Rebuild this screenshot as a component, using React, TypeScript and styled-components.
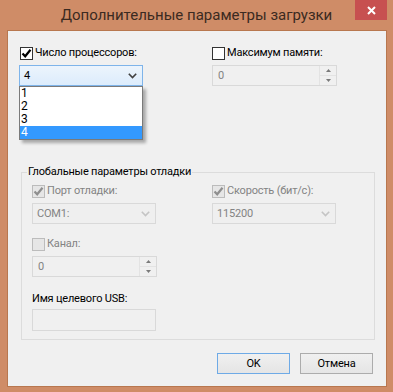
import styled, { createGlobalStyle } from 'styled-components';

const GlobalStyle = createGlobalStyle`
  html, body {
    margin: 0;
    padding: 0;
    background: #ffffff;
  }
  body {
    font-family: Roboto, "Noto Sans", "Liberation Sans", sans-serif;
  }
`;

const Window = styled.div`
  width: 393px;
  height: 392px;
  box-sizing: border-box;
  background: #cf8c67;
  display: flex;
  flex-direction: column;
`;

const TitleBar = styled.div`
  height: 30px;
  display: grid;
  grid-template-columns: 1fr auto 1fr;
  align-items: start;
`;

const Title = styled.div`
  grid-column: 2;
  font-size: 15px;
  line-height: 30px;
  color: #3b2a21;
  white-space: nowrap;
`;

const CloseButton = styled.div`
  grid-column: 3;
  justify-self: end;
  margin-right: 6px;
  width: 32px;
  height: 20px;
  background: #c75050;
  display: flex;
  align-items: center;
  justify-content: center;
`;

const Frame = styled.div`
  flex: 1;
  padding: 0 6px 6px 7px;
  display: flex;
`;

const Client = styled.div`
  flex: 1;
  background: #f0f0f0;
  border: 1px solid #b8774f;
  padding: 15px 11px 12px 11px;
  display: flex;
  flex-direction: column;
  font-size: 11px;
  letter-spacing: -0.2px;
  color: #000;
`;

const TopGrid = styled.div`
  display: grid;
  grid-template-columns: 193px 125px;
`;

const Field = styled.div`
  position: relative;
  display: flex;
  flex-direction: column;
  gap: 5px;
`;

const CheckRow = styled.div<{ $disabled?: boolean; $indent?: number }>`
  display: flex;
  align-items: center;
  height: 14px;
  gap: 2px;
  padding-left: ${({ $indent }) => $indent ?? 0}px;
  color: ${({ $disabled }) => ($disabled ? '#838383' : '#000')};
  line-height: 14px;
  white-space: nowrap;
`;

const Box = styled.span<{ $disabled?: boolean }>`
  width: 13px;
  height: 13px;
  box-sizing: border-box;
  border: 1px solid ${({ $disabled }) => ($disabled ? '#bcbcbc' : '#333333')};
  background: ${({ $disabled }) => ($disabled ? '#e6e6e6' : '#ffffff')};
  display: flex;
  align-items: center;
  justify-content: center;
  flex-shrink: 0;
`;

const ComboAnchor = styled.div`
  position: relative;
`;

const Combo = styled.div<{ $open?: boolean; $disabled?: boolean }>`
  width: 124px;
  height: 21px;
  box-sizing: border-box;
  display: flex;
  align-items: center;
  justify-content: space-between;
  padding: 0 5px 0 4px;
  border: 1px solid ${({ $open, $disabled }) => ($open ? '#7eb4ea' : $disabled ? '#d9d9d9' : '#acacac')};
  background: ${({ $open }) => ($open ? 'linear-gradient(#ecf4fc, #dcecfc)' : '#efefef')};
  color: ${({ $disabled }) => ($disabled ? '#838383' : '#000')};
`;

const DropList = styled.div`
  position: absolute;
  top: 100%;
  left: 0;
  width: 124px;
  box-sizing: border-box;
  border: 1px solid #7a7a7a;
  background: #ffffff;
  box-shadow: 3px 3px 3px rgba(0, 0, 0, 0.3);
  z-index: 2;
  font-size: 12px;
`;

const DropItem = styled.div<{ $selected?: boolean }>`
  height: 13px;
  line-height: 13px;
  padding-left: 1px;
  background: ${({ $selected }) => ($selected ? '#3399ff' : 'transparent')};
  color: ${({ $selected }) => ($selected ? '#ffffff' : '#000')};
`;

const NumberBox = styled.div`
  width: 125px;
  height: 21px;
  box-sizing: border-box;
  border: 1px solid #d9d9d9;
  display: flex;
`;

const NumberValue = styled.div`
  flex: 1;
  padding-left: 5px;
  line-height: 19px;
  color: #838383;
`;

const Spin = styled.div`
  width: 16px;
  display: flex;
  flex-direction: column;
  border-left: 1px solid #e3e3e3;
`;

const SpinHalf = styled.div`
  flex: 1;
  display: flex;
  align-items: center;
  justify-content: center;
  & + & {
    border-top: 1px solid #e3e3e3;
  }
`;

const Group = styled.fieldset`
  margin: 79px 0 0 2px;
  padding: 0 10px 8px 10px;
  border: 1px solid #dcdcdc;
  min-width: 0;
`;

const Legend = styled.legend`
  font-size: 11px;
  line-height: 14px;
  padding: 0 1px;
  margin-left: -5px;
  color: #000;
`;

const DebugGrid = styled.div`
  margin-top: 5px;
  display: grid;
  grid-template-columns: 180px 125px;
`;

const Stack = styled.div<{ $top: number }>`
  margin-top: ${({ $top }) => $top}px;
  display: flex;
  flex-direction: column;
  gap: 5px;
`;

const Label = styled.div`
  height: 14px;
  line-height: 14px;
  color: #000;
`;

const TextBox = styled.div`
  margin-top: -2px;
  width: 124px;
  height: 22px;
  box-sizing: border-box;
  border: 1px solid #d9d9d9;
`;

const ButtonRow = styled.div`
  margin-top: 13px;
  padding-right: 2px;
  display: flex;
  justify-content: flex-end;
  gap: 10px;
`;

const Button = styled.div<{ $primary?: boolean }>`
  width: 73px;
  height: 21px;
  box-sizing: border-box;
  border: 1px solid ${({ $primary }) => ($primary ? '#6eaae6' : '#acacac')};
  background: linear-gradient(#f0f0f0, #e5e5e5);
  display: flex;
  align-items: center;
  justify-content: center;
  color: #000;
`;

const CheckMark = ({ color }: { color: string }) => (
  <svg width="11" height="11" viewBox="0 0 11 11">
    <path d="M1.5 5.5 L4.2 8.3 L9.5 1.8" fill="none" stroke={color} strokeWidth="2.2" />
  </svg>
);

const Chevron = ({ color }: { color: string }) => (
  <svg width="9" height="6" viewBox="0 0 9 6">
    <path d="M0.8 0.8 L4.5 4.5 L8.2 0.8" fill="none" stroke={color} strokeWidth="1.6" />
  </svg>
);

const Arrow = ({ up }: { up?: boolean }) => (
  <svg width="5" height="3" viewBox="0 0 5 3">
    <path d={up ? 'M0 3 L2.5 0 L5 3 Z' : 'M0 0 L2.5 3 L5 0 Z'} fill="#7a7a7a" />
  </svg>
);

const Check = ({ checked, disabled }: { checked?: boolean; disabled?: boolean }) => (
  <Box $disabled={disabled}>{checked && <CheckMark color={disabled ? '#8f8f8f' : '#000'} />}</Box>
);

const Spinner = ({ value }: { value: string }) => (
  <NumberBox>
    <NumberValue>{value}</NumberValue>
    <Spin>
      <SpinHalf>
        <Arrow up />
      </SpinHalf>
      <SpinHalf>
        <Arrow />
      </SpinHalf>
    </Spin>
  </NumberBox>
);

export default function App() {
  return (
    <>
      <GlobalStyle />
      <Window>
        <TitleBar>
          <Title>Дополнительные параметры загрузки</Title>
          <CloseButton>
            <svg width="9" height="9" viewBox="0 0 9 9">
              <path d="M1 1 L8 8 M8 1 L1 8" stroke="#ffffff" strokeWidth="2" />
            </svg>
          </CloseButton>
        </TitleBar>
        <Frame>
          <Client>
            <TopGrid>
              <Field>
                <CheckRow $indent={1}>
                  <Check checked />
                  Число процессоров:
                </CheckRow>
                <ComboAnchor>
                  <Combo $open>
                    4
                    <Chevron color="#404040" />
                  </Combo>
                  <DropList>
                    {['1', '2', '3', '4'].map((n) => (
                      <DropItem key={n} $selected={n === '4'}>
                        {n}
                      </DropItem>
                    ))}
                  </DropList>
                </ComboAnchor>
              </Field>
              <Field>
                <CheckRow>
                  <Check />
                  Максимум памяти:
                </CheckRow>
                <Spinner value="0" />
              </Field>
            </TopGrid>

            <Group>
              <Legend>Глобальные параметры отладки</Legend>
              <DebugGrid>
                <Field>
                  <CheckRow $disabled>
                    <Check checked disabled />
                    Порт отладки:
                  </CheckRow>
                  <Combo $disabled>
                    COM1:
                    <Chevron color="#c4c4c4" />
                  </Combo>
                </Field>
                <Field>
                  <CheckRow $disabled>
                    <Check checked disabled />
                    Скорость (бит/с):
                  </CheckRow>
                  <Combo $disabled>
                    115200
                    <Chevron color="#c4c4c4" />
                  </Combo>
                </Field>
              </DebugGrid>
              <Stack $top={13}>
                <CheckRow $disabled>
                  <Check disabled />
                  Канал:
                </CheckRow>
                <Spinner value="0" />
              </Stack>
              <Stack $top={15}>
                <Label>Имя целевого USB:</Label>
                <TextBox />
              </Stack>
            </Group>

            <ButtonRow>
              <Button $primary>OK</Button>
              <Button>Отмена</Button>
            </ButtonRow>
          </Client>
        </Frame>
      </Window>
    </>
  );
}
